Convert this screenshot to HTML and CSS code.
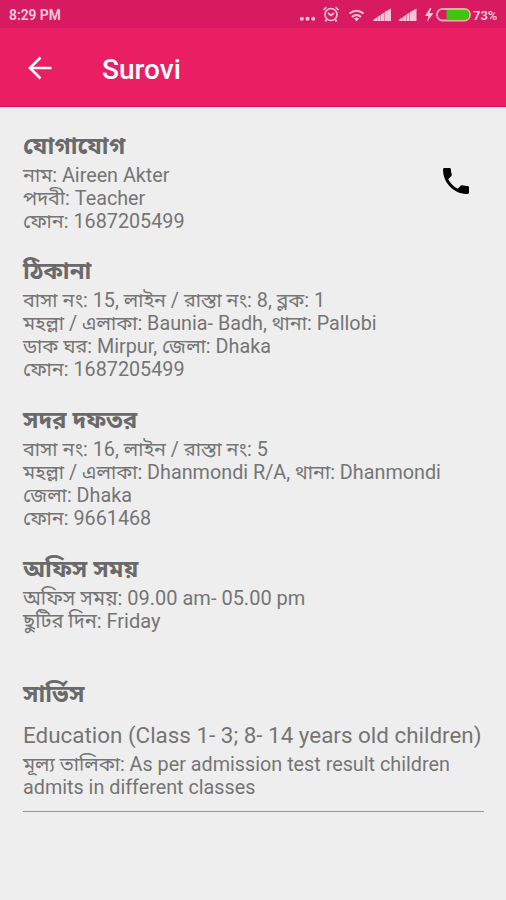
FILE: index.html
```html
<!DOCTYPE html>
<html lang="bn"><head><meta charset="utf-8"><title>Surovi</title><link rel="stylesheet" href="styles.css"></head>
<body>
<div class="status"><span class="time">8:29 PM</span>
<svg class="status-icons" width="174" height="20" viewBox="298 5 174 20" aria-hidden="true">
<g fill="#f7c3d7"><circle cx="300.800" cy="18.800" r="2"/><circle cx="306.500" cy="18.800" r="2"/><circle cx="312.200" cy="18.800" r="2"/>
<path d="M355.500 21.500l-2.500-3q2.500-2 5 0z"/>
<path d="M372.500 21v-1.500l3.500-2V21zm3.800 0v-4l3.200-2v6zm3.600 0v-6.500l3.200-2V21zm3.600 0v-9l6.500-3.500V21zM398 21v-1.500l3.500-2V21zm3.800 0v-4l3.200-2v6zm3.600 0v-6.500l3.200-2V21zm3.600 0v-9l6.500-3.500V21z"/>
<path d="M429 8l-5 8h3.500l-1.500 6 6.500-9h-4l2-5z"/></g>
<g fill="none" stroke="#f7c3d7" stroke-width="1.700"><circle cx="330" cy="14.500" r="6"/><path d="M327 13l3 2.500 3-2.500M322.500 10l3-3M337.500 10l-3-3M325.500 19.500l-1 2M334.500 19.500l1 2"/><path stroke-width="2" d="M348.500 13.500q7-5.500 14 0M351 17q4.500-4 9 0"/></g>
<rect x="436" y="9" width="33" height="11.500" rx="5.500" fill="none" stroke="#f0a9a9" stroke-width="1.800"/><path d="M445.500 10h18.500q4 0 4 4.700t-4 4.800h-18.500z" fill="#3fc50b"/></svg><span class="percent">73%</span></div>
<header class="bar"><svg class="back" width="24" height="24" viewBox="0 0 24 24"><path d="M23.500 12H2.500M12.500 1.500L2 12l10.500 10.500" fill="none" stroke="#fff" stroke-width="2.700"/></svg><h1>Surovi</h1></header>
<main>
<section class="contact"><div><h2>যোগাযোগ</h2><p>নাম: Aireen Akter</p><p>পদবী: Teacher</p><p>ফোন: 1687205499</p></div>
<svg class="phone" width="26" height="26" viewBox="3 3 18 18"><path d="M6.620 10.790c1.440 2.830 3.760 5.140 6.590 6.590l2.200-2.200c.27-.27.67-.36 1.020-.24 1.120.37 2.330.57 3.570.57.550 0 1 .45 1 1V20c0 .55-.45 1-1 1C10.610 21 3 13.390 3 4c0-.55.45-1 1-1h3.500c.55 0 1 .45 1 1 0 1.250.2 2.450.57 3.570.11.35.03.74-.25 1.020z"/></svg></section>
<section><h2>ঠিকানা</h2><p>বাসা নং: 15, লাইন / রাস্তা নং: 8, ব্লক: 1</p><p>মহল্লা / এলাকা: Baunia- Badh, থানা: Pallobi</p><p>ডাক ঘর: Mirpur, জেলা: Dhaka</p><p>ফোন: 1687205499</p></section>
<section><h2>সদর দফতর</h2><p>বাসা নং: 16, লাইন / রাস্তা নং: 5</p><p>মহল্লা / এলাকা: Dhanmondi R/A, থানা: Dhanmondi</p><p>জেলা: Dhaka</p><p>ফোন: 9661468</p></section>
<section><h2>অফিস সময়</h2><p class="hours">অফিস সময়: 09.00 am- 05.00 pm</p><p class="hours">ছুটির দিন: Friday</p></section>
<section class="services"><h2>সার্ভিস</h2><h3>Education (Class 1- 3; 8- 14 years old children)</h3><p>মূল্য তালিকা: As per admission test result children</p><p>admits in different classes</p></section>
</main></body></html>
```
FILE: styles.css
```css
*{box-sizing:border-box}
body{margin:0;height:900px;background:#eee;color:#757575;font-family:Roboto,"Noto Sans Bengali","Noto Sans",sans-serif;overflow:hidden}
.status{height:28px;background:#d81b60;display:flex;align-items:center;padding:2px 7px 0 9px;color:#f9cfde;font-size:13.800px;font-weight:600}
.status-icons{margin-left:auto;flex:none}
.percent{width:26px;font-size:13px}
.bar{height:79px;background:#e91e63;border-bottom:1px solid #e00d55;display:flex;align-items:center;padding-left:28px;color:#fff}
.back{margin-top:2px}
.bar h1{font-size:28px;font-weight:500;margin:4px 0 0 50px}
main{padding:27px 22px 0 23px}
section{margin-bottom:27px}
h2,h3,p{margin:0;white-space:nowrap}
h2{font-size:24px;line-height:25px;height:30px;font-weight:700;color:#6a6a6a}
p{font-size:19.780px;line-height:23px;height:23px}
.contact{display:flex;justify-content:space-between;margin-bottom:26px}
.phone{margin:34px 15px 0 0;fill:#000}
.hours{font-size:20px}
.services{margin-top:49px;padding-bottom:12px;border-bottom:1px solid #999}
h3{font-size:22.420px;font-weight:400;line-height:30px;height:32px;margin-top:8px}
h3 + p{margin-top:1px}
```
